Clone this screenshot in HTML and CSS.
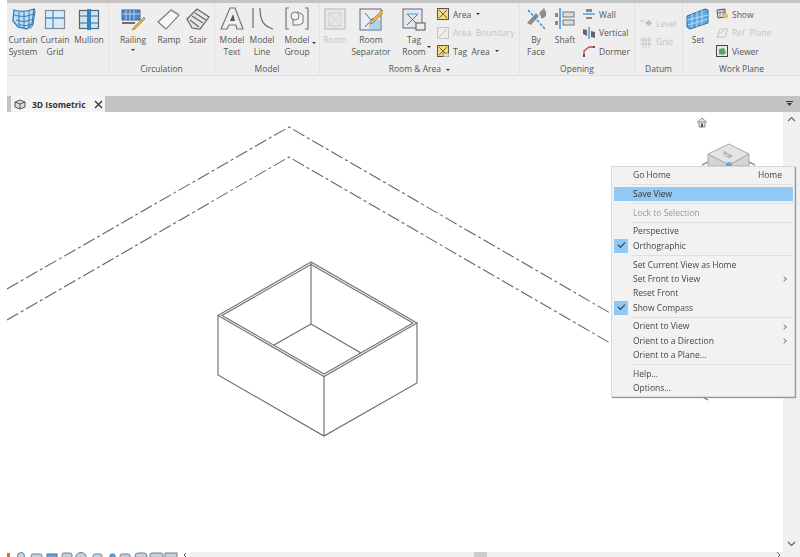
FILE: index.html
```html
<!DOCTYPE html>
<html lang="en">
<head>
<meta charset="utf-8">
<title>3D Isometric</title>
<link rel="stylesheet" href="styles.css">
</head>
<body>
<div class="app">
  <div class="topstrip"></div>
  <div class="ribbon">
    <section class="panel p-build">
      <div class="panel-body">
        <div class="tool w32"><div class="ico"><svg width="26" height="24" viewBox="0 0 26 24"><path d="M4 3c6 2 12 2 20-1l-2 15-5 5-9-2-5-6z" fill="#c3ddf1" stroke="#2f7dbf" stroke-width="1.300"/><path d="M9 4.500v15M14 5v16M19 4v17M4.500 8c6 2 12 2 19-1M6 13c5 2 10 2 17-1M8 17c5 2 9 2 13 0" stroke="#2f7dbf" fill="none"/><path d="M24 2l1 2-2 14-3 4" stroke="#667" fill="none"/></svg></div><span>Curtain</span><span>System</span></div>
        <div class="tool w32"><div class="ico"><svg width="22" height="22" viewBox="0 0 22 22"><rect x="1.500" y="2.500" width="19" height="18" fill="#dbeaf6" stroke="#7f8c97" stroke-width="1.200"/><path d="M1.500 10h19M9 2.500v18" stroke="#3f94d6" stroke-width="1.300"/></svg></div><span>Curtain</span><span>Grid</span></div>
        <div class="tool w36"><div class="ico"><svg width="22" height="22" viewBox="0 0 22 22"><rect x="1.500" y="2.500" width="19" height="18" fill="#cfe4f4" stroke="#4f6679" stroke-width="1.200"/><path d="M1.500 8h19M1.500 15h19" stroke="#4f6679"/><rect x="9" y="1" width="4" height="21" fill="#2f86c7"/></svg></div><span>Mullion</span></div>
      </div>
      <div class="panel-title"></div>
    </section>
    <section class="panel p-circ">
      <div class="panel-body">
        <div class="tool w48"><div class="ico"><svg width="26" height="26" viewBox="0 0 26 26"><rect x="2" y="4" width="18" height="10" fill="#4f86c5" stroke="#356a9f"/><path d="M2 8h18M6 4v10M10 4v10M14 4v10" stroke="#cfe0f0" stroke-width=".8"/><path d="M2 17h13" stroke="#6d6d6d" stroke-width="2"/><path d="M24 11L14 21l-2 3 3-1 10-10z" fill="#e9b44c" stroke="#9a7a32" stroke-width=".7"/></svg></div><span>Railing</span><i class="caret"></i></div>
        <div class="tool w24"><div class="ico"><svg width="24" height="24" viewBox="0 0 24 24"><path d="M1 15L14 3l8 5-13 14z" fill="#f7f7f7" stroke="#777" stroke-width="1.100"/><path d="M14 3l8 5" stroke="#999" stroke-width="2"/></svg></div><span>Ramp</span></div>
        <div class="tool w34"><div class="ico"><svg width="24" height="24" viewBox="0 0 24 24"><path d="M1 12L11 2l12 8-9 12-8-1z" fill="#e6e6e6" stroke="#666" stroke-width="1.200"/><path d="M6 9l11 7M9 6l11 7M4 13l9 7" stroke="#666" stroke-width="1.100" fill="none"/></svg></div><span>Stair</span></div>
      </div>
      <div class="panel-title">Circulation</div>
    </section>
    <section class="panel p-model">
      <div class="panel-body">
        <div class="tool w34"><div class="ico"><svg width="24" height="26" viewBox="0 0 24 26"><path d="M1 23L10 2h5l8 21h-6l-1-4H9l-2 4z" fill="#eee" stroke="#777" stroke-width="1.200"/><path d="M10 15h5l-2-7z" fill="#555"/></svg></div><span>Model</span><span>Text</span></div>
        <div class="tool w26"><div class="ico"><svg width="24" height="26" viewBox="0 0 24 26"><path d="M3 2v20M10 2c0 12 3 18 13 21" fill="none" stroke="#777" stroke-width="1.300"/></svg></div><span>Model</span><span>Line</span></div>
        <div class="tool w44"><div class="ico"><svg width="24" height="26" viewBox="0 0 24 26"><path d="M4 2H1v21h3M20 2h3v21h-3" fill="none" stroke="#777" stroke-width="1.200"/><path d="M8 8l5-2 5 3v8l-4 2H8z" fill="#f3f3f3" stroke="#777"/><circle cx="10" cy="10" r="4" fill="#f3f3f3" stroke="#777"/></svg></div><span>Model</span><span>Group</span><i class="caret side"></i></div>
      </div>
      <div class="panel-title">Model</div>
    </section>
    <section class="panel p-room">
      <div class="panel-body">
        <div class="tool w30 off"><div class="ico"><svg width="24" height="24" viewBox="0 0 24 24"><rect x="2" y="2" width="20" height="20" fill="#e8e8e8" stroke="#c8c8c8" stroke-width="1.500"/><path d="M6 6h12v13H6zM6 6l12 13M18 6L6 19" fill="none" stroke="#cfcfcf"/></svg></div><span>Room</span></div>
        <div class="tool w42"><div class="ico"><svg width="24" height="24" viewBox="0 0 24 24"><rect x="1" y="2" width="21" height="21" fill="#e9eef2" stroke="#667"/><path d="M6 6l12 14M6 20L14 11" stroke="#667" fill="none"/><path d="M10 22V13h11v9z" fill="#a7d6f0"/><path d="M23 3L12 14l-1 3 3-1L25 5z" fill="#e9b44c" stroke="#8a6d2f" stroke-width=".6"/></svg></div><span>Room</span><span>Separator</span></div>
        <div class="tool w44"><div class="ico"><svg width="24" height="24" viewBox="0 0 24 24"><rect x="1" y="2" width="19" height="19" fill="#dfe9ef" stroke="#667"/><path d="M5 7l11 11M16 7L5 18" stroke="#667"/><path d="M5 7h11" stroke="#4b97d2"/><rect x="14" y="16" width="9" height="7" fill="#eee" stroke="#555"/></svg></div><span>Tag</span><span>Room</span><i class="caret tag"></i></div>
        <div class="stack area">
          <div class="row"><svg class="s" width="12" height="12" viewBox="0 0 12 12"><rect x=".5" y=".5" width="11" height="11" fill="#f3dc76" stroke="#555"/><path d="M2 2l8 8M10 2l-8 8" stroke="#666"/></svg><span>Area</span><i class="caret inl"></i></div>
          <div class="row off"><svg class="s" width="12" height="12" viewBox="0 0 12 12"><rect x=".5" y=".5" width="11" height="11" fill="#ececec" stroke="#c5c5c5"/><path d="M2 10l8-8" stroke="#c5c5c5"/></svg><span>Area&nbsp; Boundary</span></div>
          <div class="row"><svg class="s" width="12" height="12" viewBox="0 0 12 12"><rect x=".5" y=".5" width="11" height="11" fill="#f3dc76" stroke="#555"/><path d="M2 2l8 8M10 2l-8 8" stroke="#666"/><rect x="6" y="8" width="6" height="4" fill="#ddd" stroke="#555" stroke-width=".6"/></svg><span>Tag&nbsp; Area</span><i class="caret inl"></i></div>
        </div>
      </div>
      <div class="panel-title">Room &amp; Area <i class="caret title"></i></div>
    </section>
    <section class="panel p-open">
      <div class="panel-body">
        <div class="tool w32"><div class="ico"><svg width="24" height="26" viewBox="0 0 24 26"><path d="M3 17l9-10 3 3-8 9zM15 7l5-5 2 4v4l-4 3z" fill="#8d8d8d"/><path d="M4 4l17 19" stroke="#3a8fd6" stroke-width="1.500" stroke-dasharray="3 1.500"/></svg></div><span>By</span><span>Face</span></div>
        <div class="tool w26"><div class="ico"><svg width="22" height="26" viewBox="0 0 22 26"><path d="M6 2v21" stroke="#3a8fd6" stroke-width="1.500"/><rect x="1" y="7" width="3" height="4" fill="#888"/><rect x="9" y="6" width="11" height="5" fill="#dcdcdc" stroke="#777"/><rect x="9" y="14" width="11" height="5" fill="#dcdcdc" stroke="#777"/><rect x="1" y="15" width="3" height="4" fill="#888"/></svg></div><span>Shaft</span></div>
        <div class="stack open">
          <div class="row"><svg class="s" width="12" height="12" viewBox="0 0 12 12"><rect x="3" y="1" width="6" height="3" fill="#888"/><rect x="3" y="9" width="6" height="2" fill="#888"/><path d="M0 6h12" stroke="#3a8fd6" stroke-width="1.300"/></svg><span>Wall</span></div>
          <div class="row"><svg class="s" width="12" height="12" viewBox="0 0 12 12"><path d="M0 2l4 1v6L0 7zM8 4l4 1v6L8 10z" fill="#666"/><path d="M6 0v12" stroke="#3a8fd6" stroke-width="1.300"/></svg><span>Vertical</span></div>
          <div class="row"><svg class="s" width="12" height="12" viewBox="0 0 12 12"><path d="M1 11V6l5-4h5" fill="none" stroke="#c9473a" stroke-width="1.300"/><rect x="0" y="9" width="2" height="3" fill="#555"/><rect x="10" y="1" width="2" height="2" fill="#555"/></svg><span>Dormer</span></div>
        </div>
      </div>
      <div class="panel-title">Opening</div>
    </section>
    <section class="panel p-datum">
      <div class="panel-body">
        <div class="stack datum off">
          <div class="row"><svg class="s" width="12" height="12" viewBox="0 0 12 12"><path d="M0 4h4" stroke="#c5c5c5"/><path d="M5 6l4-3 3 3-3 3z" fill="#bdbdbd"/></svg><span>Level</span></div>
          <div class="row"><svg class="s" width="12" height="12" viewBox="0 0 12 12"><path d="M3 1v11M6 1v11M9 1v11M0 4h12M0 8h12" stroke="#c5c5c5"/></svg><span>Grid</span></div>
        </div>
      </div>
      <div class="panel-title">Datum</div>
    </section>
    <section class="panel p-work">
      <div class="panel-body">
        <div class="tool w30 set"><div class="ico"><svg width="24" height="24" viewBox="0 0 24 24"><path d="M1 9l18-7 3 1v13L4 22l-3-2z" fill="#5ba7de" stroke="#2f6f9f"/><path d="M6 7v14M11 5v15M16 3v15M1 13l21-5M2 18l20-6" stroke="#d4e8f6" stroke-width=".8"/></svg></div><span>Set</span></div>
        <div class="stack work">
          <div class="row"><svg class="s" width="12" height="12" viewBox="0 0 12 12"><path d="M1 2l8-1v8l-7 1z" fill="#e8e8e8" stroke="#555"/><path d="M4 2v7M7 1v8M1 5l8-1" stroke="#555" stroke-width=".6"/><circle cx="9.500" cy="8" r="2.500" fill="#f3c23f"/></svg><span>Show</span></div>
          <div class="row off"><svg class="s" width="12" height="12" viewBox="0 0 12 12"><path d="M1 10L4 2h8l-3 8z" fill="none" stroke="#c5c5c5"/><path d="M3 7l6-4" stroke="#c5c5c5"/></svg><span>Ref&nbsp; Plane</span></div>
          <div class="row"><svg class="s" width="12" height="12" viewBox="0 0 12 12"><rect x=".5" y=".5" width="11" height="11" fill="#e8e8e8" stroke="#444"/><path d="M3 9V4l5-1 2 5-3 2z" fill="#5aa469"/></svg><span>Viewer</span></div>
        </div>
      </div>
      <div class="panel-title">Work Plane</div>
    </section>
  </div>
  <div class="band"></div>
  <div class="tabbar">
    <div class="tab">
      <svg class="tab-ico" width="12" height="11" viewBox="0 0 12 11"><path d="M1 3l5-2 5 2v5l-5 2-5-2z" fill="#ddd" stroke="#555"/><path d="M1 3l5 2 5-2M6 5v5" stroke="#555" fill="none"/></svg>
      <span class="tab-text">3D Isometric</span>
      <svg class="tab-x" width="9" height="9" viewBox="0 0 9 9"><path d="M1 1l7 7M8 1L1 8" stroke="#333" stroke-width="1.300"/></svg>
    </div>
    <svg class="tab-menu" width="7" height="6" viewBox="0 0 7 6"><path d="M0 .5h7" stroke="#333"/><path d="M1 2h5L3.500 5z" fill="#333"/></svg>
  </div>
  <div class="main">
    <div class="viewport">
      <svg class="drawing" width="776" height="440" viewBox="7 112 776 440">
        <g class="axis">
          <path d="M7 289L289 127L610 313"/>
          <path d="M7 320L289 157L610 343"/>
          <path d="M701 396L708 400"/>
        </g>
        <g class="box">
          <path d="M311 262V324M311 324L274 345M311 324L361 353"/>
          <path d="M218 315V375L324 436L417 383V323M324 376V436"/>
        </g>
        <path class="rim" d="M311 262L218 315.500L324 376.500L417 323Z"/>
        <path class="rim" d="M311 264.500L222 315.500L324 374L413 323Z"/>
        <path class="home" d="M697 122.500L702 118L707 122.500M699 122V127H705V122Z"/>
        <path class="home-door" d="M701 123.500h2V127h-2Z"/>
        <path class="cube-side" d="M708 154V166H749V154L729 165Z"/>
        <path class="cube" d="M708 154L729 144L749 154L729 165Z"/>
        <path class="cube-stub" d="M702 165L708 162M755 165L749 162"/>
        <text class="cube-text" x="723" y="157" transform="rotate(28 728 154)">TOP</text>
        <circle class="cube-dot" cx="729" cy="165" r="3"/>
      </svg>
    </div>
    <div class="vscroll">
      <svg width="9" height="6" viewBox="0 0 9 6"><path d="M1 5l3.500-3.500L8 5" fill="none" stroke="#666" stroke-width="1.200"/></svg>
      <svg width="9" height="6" viewBox="0 0 9 6"><path d="M1 1l3.500 3.500L8 1" fill="none" stroke="#666" stroke-width="1.200"/></svg>
    </div>
    <div class="menu">
      <div class="item"><span>Go Home</span><span class="key">Home</span></div>
      <div class="sep"></div>
      <div class="item hot"><span>Save View</span></div>
      <div class="sep"></div>
      <div class="item dim"><span>Lock to Selection</span></div>
      <div class="sep"></div>
      <div class="item"><span>Perspective</span></div>
      <div class="item checked"><span>Orthographic</span></div>
      <div class="sep"></div>
      <div class="item"><span>Set Current View as Home</span></div>
      <div class="item more"><span>Set Front to View</span></div>
      <div class="item"><span>Reset Front</span></div>
      <div class="item checked"><span>Show Compass</span></div>
      <div class="sep"></div>
      <div class="item more"><span>Orient to View</span></div>
      <div class="item more"><span>Orient to a Direction</span></div>
      <div class="item"><span>Orient to a Plane...</span></div>
      <div class="sep"></div>
      <div class="item"><span>Help...</span></div>
      <div class="item"><span>Options...</span></div>
    </div>
  </div>
  <div class="hscroll">
    <svg class="viewbar" width="183" height="5" viewBox="0 0 183 5">
      <rect x="0" y="1" width="3" height="5" fill="#d9674a"/>
      <g fill="#c6d6e4" stroke="#5b86ad">
        <circle cx="14" cy="4" r="3.500"/>
      </g>
      <g fill="#c9cfd5" stroke="#6f8192">
        <rect x="24" y="2" width="11" height="5" rx="2"/>
        <rect x="55" y="1" width="10" height="5" rx="2"/>
        <circle cx="74" cy="6" r="5.500"/>
        <rect x="86" y="2" width="9" height="5" rx="2"/>
        <rect x="113" y="2" width="10" height="5" rx="2"/>
        <rect x="128" y="1" width="12" height="6" rx="3"/>
        <rect x="143" y="1" width="13" height="6" rx="2"/>
        <rect x="158" y="1" width="12" height="6"/>
      </g>
      <g fill="#6f9fd0" stroke="#3f74a8">
        <rect x="40" y="2" width="10" height="5"/>
        <rect x="103" y="2" width="5" height="5" rx="2"/>
      </g>
      <path d="M179 5l-2-2 2-2" fill="none" stroke="#555"/>
    </svg>
    <div class="thumb"></div>
    <svg class="hs-arrow" width="6" height="5" viewBox="0 0 6 5"><path d="M1 0l3 3-3 3" fill="none" stroke="#666"/></svg>
  </div>
</div>
</body>
</html>
```
FILE: styles.css
```css
* { box-sizing: border-box; }
html, body { margin: 0; height: 100%; background: #fff; overflow: hidden; }
body { font-family: "Open Sans", "Liberation Sans", sans-serif; color: #555; font-size: 8.5px; }

.app {
  width: 800px;
  height: 557px;
  padding-left: 7px;
  display: flex;
  flex-direction: column;
  filter: blur(0.35px);
}

.topstrip { height: 3px; background: #c4c4c4; flex: none; }

.ribbon {
  display: flex;
  height: 73px;
  flex: none;
  background: #eeeeee;
  border-bottom: 1px solid #dedede;
}
.panel { display: flex; flex-direction: column; border-right: 1px solid #e2e2e2; }
.p-build { width: 102px; }
.p-circ { width: 106px; }
.p-model { width: 105px; }
.p-room { width: 200px; }
.p-open { width: 115px; }
.p-datum { width: 48px; }
.p-work { flex: 1; border-right: 0; }

.panel-body { display: flex; height: 59px; flex: none; }
.panel-title {
  height: 13px;
  line-height: 13px;
  text-align: center;
  white-space: nowrap;
}

.tool {
  position: relative;
  display: flex;
  flex-direction: column;
  align-items: center;
  line-height: 12px;
  white-space: nowrap;
  flex: none;
}
.ico {
  height: 31px;
  display: flex;
  align-items: center;
  justify-content: center;
}
.w24 { width: 24px; }
.w26 { width: 26px; }
.w30 { width: 30px; }
.w32 { width: 32px; }
.w34 { width: 34px; }
.w36 { width: 36px; }
.w42 { width: 42px; }
.w44 { width: 44px; }
.w48 { width: 48px; }

.off { color: #c4c4c4; }

.caret {
  display: inline-block;
  width: 0;
  height: 0;
  border: 2px solid transparent;
  border-top: 2.5px solid #333;
  border-bottom: 0;
}
.tool > .caret { margin-top: 3px; }
.tool > .caret.side { position: absolute; right: 3px; top: 39px; margin: 0; }
.tool > .caret.tag { position: absolute; right: 5px; top: 43px; margin: 0; }
.caret.inl { margin-left: 5px; }
.caret.title { margin-left: 3px; vertical-align: 1px; }

.stack { display: flex; flex-direction: column; padding-top: 2px; }
.stack.area { width: 84px; padding-left: 1px; }
.stack.open { padding-left: 5px; }
.stack.datum { padding: 11px 0 0 5px; }
.stack.work { padding-left: 3px; }
.row {
  height: 18.5px;
  display: flex;
  align-items: center;
  white-space: nowrap;
}
.s { flex: none; margin-right: 4px; }

.band { height: 20px; background: #f1f1f1; flex: none; }

.tabbar {
  height: 16px;
  flex: none;
  background: #c3c3c3;
  padding-left: 4px;
  display: flex;
  align-items: stretch;
  justify-content: space-between;
}
.tab {
  width: 94px;
  background: #f4f4f4;
  display: flex;
  align-items: center;
  padding-left: 3px;
  color: #333;
}
.tab-ico { flex: none; margin-right: 6px; }
.tab-text { font-weight: 700; font-size: 8.5px; white-space: nowrap; flex: 1; }
.tab-x { flex: none; margin-right: 2px; }
.tab-menu { align-self: center; margin-right: 7px; }

.main { position: relative; display: flex; height: 440px; flex: none; }
.viewport { flex: 1; min-width: 0; background: #fff; }
.drawing { display: block; }
.axis path { fill: none; stroke: #666; stroke-width: 1.1; stroke-dasharray: 13 3 3 3; }
.box path { fill: none; stroke: #6a6a6a; stroke-width: 1.1; }
.rim { fill: none; stroke: #777; stroke-width: 1.2; }
.home { fill: #e6e6e6; stroke: #888; stroke-width: 1; }
.home-door { fill: #555; }
.cube { fill: #e4e4e4; stroke: #aaa; }
.cube-side { fill: #d4d4d4; stroke: #aaa; }
.cube-stub { fill: none; stroke: #999; stroke-width: 1.500; }
.cube-text { font-size: 5px; fill: #666; }
.cube-dot { fill: #6aa9e0; }

.vscroll {
  width: 17px;
  flex: none;
  background: #f0f0f0;
  display: flex;
  flex-direction: column;
  justify-content: space-between;
  align-items: center;
  padding: 4px 0 5px;
}

.menu {
  position: absolute;
  left: 604px;
  top: 54px;
  width: 184px;
  padding: 1px 1px 0 2px;
  background: #f2f2f2;
  border: 1px solid #d8d8d8;
  box-shadow: 1px 1px 1px #9a9a9a;
  color: #444;
}
.item {
  position: relative;
  height: 14.4px;
  line-height: 14.4px;
  padding: 0 11px 0 19px;
  display: flex;
  justify-content: space-between;
  white-space: nowrap;
}
.sep { height: 4.4px; padding: 1.7px 0 1.7px 17px; }
.sep::before { content: ""; display: block; height: 1px; background: #e0e0e0; }
.hot { background: #90c8f6; color: #333; }
.dim { color: #999; }
.checked::before {
  content: "";
  position: absolute;
  left: 0;
  top: 0;
  width: 14px;
  height: 14.4px;
  background: #90c8f6;
}
.checked::after {
  content: "";
  position: absolute;
  left: 4px;
  top: 3.500px;
  width: 6px;
  height: 3px;
  border-left: 1.200px solid #333;
  border-bottom: 1.200px solid #333;
  transform: rotate(-45deg);
}
.more::after {
  content: "";
  position: absolute;
  right: 7px;
  top: 5.500px;
  width: 3px;
  height: 3px;
  border-top: 1px solid #888;
  border-right: 1px solid #888;
  transform: rotate(45deg);
}

.hscroll {
  position: relative;
  height: 5px;
  flex: none;
  background: linear-gradient(to right, #fff 183px, #f0f0f0 183px);
  display: flex;
  overflow: hidden;
}
.viewbar { flex: none; display: block; }
.thumb { width: 13px; background: #cdcdcd; margin-left: 284px; flex: none; }
.hs-arrow { flex: none; margin-left: 289px; display: block; }
```
